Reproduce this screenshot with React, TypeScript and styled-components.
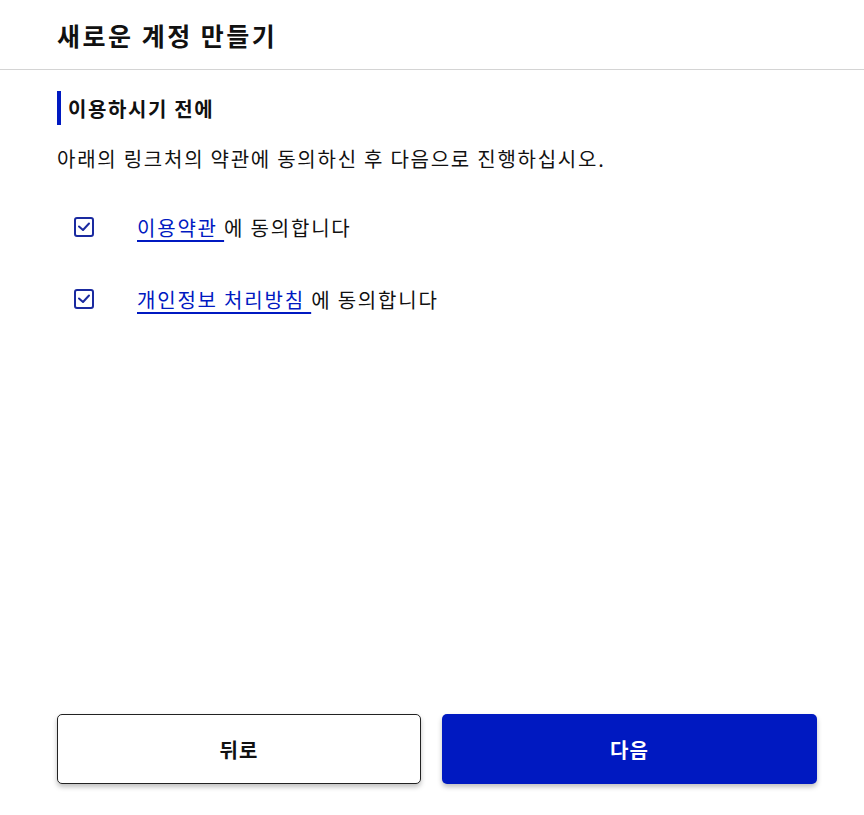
import styled, { createGlobalStyle } from 'styled-components';

const GlobalStyle = createGlobalStyle`
  html, body {
    margin: 0;
    padding: 0;
    background: #fff;
  }
  body {
    font-family: 'Noto Sans CJK KR', 'Noto Sans', sans-serif;
    color: #111;
  }
`;

const Page = styled.div`
  display: flex;
  flex-direction: column;
  min-height: 100vh;
  box-sizing: border-box;
`;

const Header = styled.header`
  height: 70px;
  display: flex;
  align-items: center;
  padding: 0 57px;
  border-bottom: 1px solid #d4d4d4;
  box-sizing: border-box;
`;

const Title = styled.h1`
  margin: 0;
  font-size: 25px;
  font-weight: 700;
  letter-spacing: 2.5px;
  color: #111;
`;

const Content = styled.main`
  padding: 21px 57px 0;
  flex: 1;
`;

const SectionTitle = styled.h2`
  margin: 0;
  border-left: 4px solid #0019c1;
  padding-left: 7px;
  height: 34px;
  display: flex;
  align-items: center;
  font-size: 20px;
  font-weight: 700;
  letter-spacing: 1.6px;
  color: #111;
`;

const Lead = styled.p`
  margin: 20px 0 0;
  font-size: 20px;
  line-height: 28px;
  letter-spacing: 1.75px;
  color: #111;
`;

const AgreeList = styled.ul`
  list-style: none;
  margin: 40px 0 0;
  padding: 0 0 0 17px;
  display: flex;
  flex-direction: column;
  gap: 44px;
`;

const AgreeRow = styled.li`
  display: flex;
  align-items: center;
  height: 28px;
  font-size: 20px;
  letter-spacing: 1.8px;
  white-space: pre;
  color: #111;
`;

const Box = styled.span`
  width: 20px;
  height: 20px;
  box-sizing: border-box;
  border: 2px solid #1a2aa0;
  border-radius: 3px;
  display: inline-flex;
  align-items: center;
  justify-content: center;
  margin-right: 43px;
  flex-shrink: 0;
`;

const TermLink = styled.a`
  color: #0019c1;
  text-decoration: underline;
  text-underline-offset: 4px;
  text-decoration-thickness: 2px;
`;

const Footer = styled.footer`
  display: grid;
  grid-template-columns: 364fr 375fr;
  gap: 21px;
  padding: 0 47px 31px 57px;
`;

const ActionButton = styled.button<{ $primary?: boolean }>`
  height: 70px;
  border-radius: 5px;
  font-family: inherit;
  font-size: 20px;
  font-weight: 700;
  letter-spacing: 1px;
  cursor: pointer;
  border: ${p => (p.$primary ? 'none' : '1px solid #222')};
  background: ${p => (p.$primary ? '#0019c1' : '#fff')};
  color: ${p => (p.$primary ? '#fff' : '#111')};
  box-shadow: 0 3px 5px rgba(0, 0, 0, 0.25);
`;

const Check = () => (
  <Box>
    <svg width="14" height="12" viewBox="0 0 14 12" fill="none">
      <path d="M2 5.5 L6 9 L12 2.5" stroke="#1a2aa0" strokeWidth="2" strokeLinecap="round" strokeLinejoin="round" />
    </svg>
  </Box>
);

const terms = ['이용약관', '개인정보 처리방침'];

export default function App() {
  return (
    <Page>
      <GlobalStyle />
      <Header>
        <Title>새로운 계정 만들기</Title>
      </Header>
      <Content>
        <SectionTitle>이용하시기 전에</SectionTitle>
        <Lead>아래의 링크처의 약관에 동의하신 후 다음으로 진행하십시오.</Lead>
        <AgreeList>
          {terms.map(t => (
            <AgreeRow key={t}>
              <Check />
              <TermLink href="#">{`${t} `}</TermLink>
              {'에 동의합니다'}
            </AgreeRow>
          ))}
        </AgreeList>
      </Content>
      <Footer>
        <ActionButton>뒤로</ActionButton>
        <ActionButton $primary>다음</ActionButton>
      </Footer>
    </Page>
  );
}
